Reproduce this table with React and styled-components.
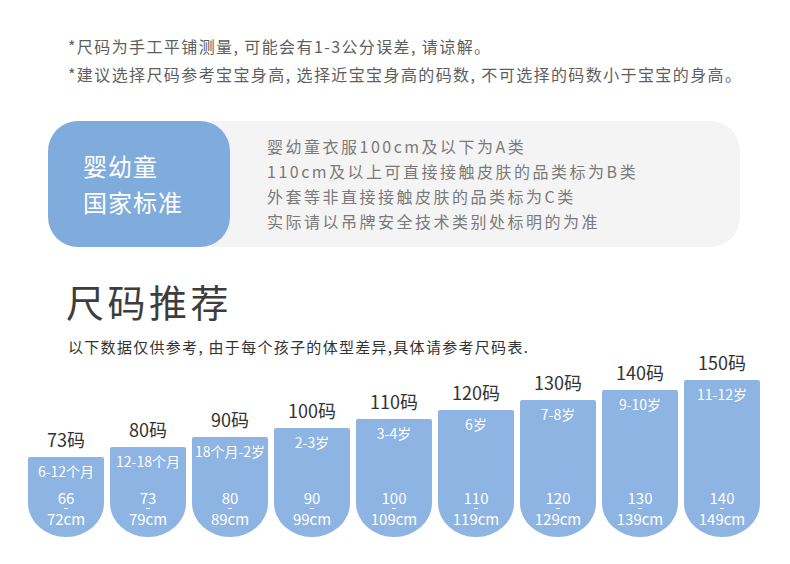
import React from 'react';
import styled, { createGlobalStyle } from 'styled-components';

const GlobalStyle = createGlobalStyle`
  body {
    margin: 0;
    background: #fff;
    font-family: "Noto Sans CJK SC", "Noto Sans", sans-serif;
  }
`

const sizes = [
  { size: '73', age: '6-12个月', from: '66', to: '72cm', height: 80 },
  { size: '80', age: '12-18个月', from: '73', to: '79cm', height: 90 },
  { size: '90', age: '18个月-2岁', from: '80', to: '89cm', height: 100 },
  { size: '100', age: '2-3岁', from: '90', to: '99cm', height: 109 },
  { size: '110', age: '3-4岁', from: '100', to: '109cm', height: 118 },
  { size: '120', age: '6岁', from: '110', to: '119cm', height: 127 },
  { size: '130', age: '7-8岁', from: '120', to: '129cm', height: 137 },
  { size: '140', age: '9-10岁', from: '130', to: '139cm', height: 147 },
  { size: '150', age: '11-12岁', from: '140', to: '149cm', height: 157 },
]

const App = () => (
  <Page>
    <GlobalStyle />
    <Notes>
      <div>*尺码为手工平铺测量, 可能会有1-3公分误差, 请谅解。</div>
      <div>*建议选择尺码参考宝宝身高, 选择近宝宝身高的码数, 不可选择的码数小于宝宝的身高。</div>
    </Notes>

    <Standard>
      <Badge>
        <div>婴幼童</div>
        <div>国家标准</div>
      </Badge>
      <Panel>
        <div>婴幼童衣服100cm及以下为A类</div>
        <div>110cm及以上可直接接触皮肤的品类标为B类</div>
        <div>外套等非直接接触皮肤的品类标为C类</div>
        <div>实际请以吊牌安全技术类别处标明的为准</div>
      </Panel>
    </Standard>

    <Title>尺码推荐</Title>
    <Subtitle>以下数据仅供参考, 由于每个孩子的体型差异,具体请参考尺码表.</Subtitle>

    <Chart>
      {sizes.map(s => (
        <Column key={s.size}>
          <SizeLabel>{s.size}码</SizeLabel>
          <Bar style={{ height: s.height }}>
            <Age>{s.age}</Age>
            <Range>
              <span>{s.from}</span>
              <Dash />
              <span>{s.to}</span>
            </Range>
          </Bar>
        </Column>
      ))}
    </Chart>
  </Page>
)

export default App

const Page = styled.div`
  width: 790px;
  height: 564px;
  overflow: hidden;
  padding-top: 32px;
  box-sizing: border-box;
`
const Notes = styled.div`
  padding-left: 68px;
  color: #5e5e5e;
  font-size: 16px;
  line-height: 28px;
  letter-spacing: 1.4px;
`
const Standard = styled.div`
  display: flex;
  margin: 33px 50px 0 48px;
  height: 126px;
`
const Badge = styled.div`
  position: relative;
  z-index: 1;
  width: 182px;
  flex-shrink: 0;
  box-sizing: border-box;
  padding-left: 35px;
  border-radius: 30px;
  background: #80abdd;
  color: #fff;
  font-size: 24px;
  line-height: 36px;
  letter-spacing: 1px;
  display: flex;
  flex-direction: column;
  justify-content: center;
`
const Panel = styled.div`
  flex: 1;
  margin-left: -20px;
  padding-left: 57px;
  border-radius: 0 30px 30px 0;
  background: #f4f4f4;
  color: #7a7a7a;
  font-size: 16px;
  line-height: 25px;
  letter-spacing: 2.5px;
  display: flex;
  flex-direction: column;
  justify-content: center;
`
const Title = styled.div`
  margin-top: 30px;
  padding-left: 66px;
  color: #3d3d3d;
  font-size: 38px;
  line-height: 48px;
  letter-spacing: 3.5px;
`
const Subtitle = styled.div`
  margin-top: 13px;
  padding-left: 68px;
  color: #333;
  font-size: 15px;
  line-height: 18px;
  letter-spacing: 1.3px;
`
const Chart = styled.div`
  display: flex;
  align-items: flex-end;
  gap: 6px;
  margin-top: -3px;
  padding-left: 28px;
`
const Column = styled.div`
  width: 76px;
  display: flex;
  flex-direction: column;
  align-items: center;
`
const SizeLabel = styled.div`
  color: #333;
  font-size: 18px;
  line-height: 18px;
  margin-bottom: 9px;
`
const Bar = styled.div`
  width: 100%;
  box-sizing: border-box;
  padding: 4px 0 9px;
  background: #8db4e2;
  border-radius: 2px 2px 38px 38px / 2px 2px 34px 34px;
  color: #fff;
  display: flex;
  flex-direction: column;
  align-items: center;
  justify-content: space-between;
`
const Age = styled.div`
  font-size: 14px;
  line-height: 20px;
  white-space: nowrap;
`
const Range = styled.div`
  display: flex;
  flex-direction: column;
  align-items: center;
  font-size: 15px;
  line-height: 18px;
`
const Dash = styled.span`
  display: block;
  width: 4px;
  height: 1px;
  margin: 1px 0;
  background: rgba(255, 255, 255, 0.9);
`
